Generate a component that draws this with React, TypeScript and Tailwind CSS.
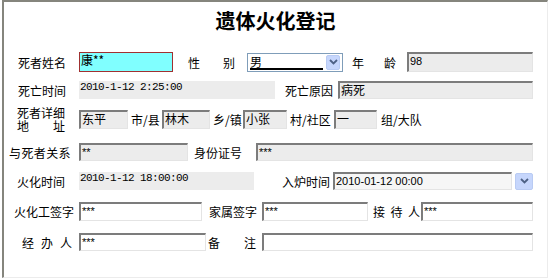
import React from "react";

const cjk = "font-['SimSun','Noto_Sans_CJK_SC',sans-serif]";
const inset =
  "h-full shrink-0 border-t-2 border-l-2 border-b border-r border-t-[#7c7c7c] border-l-[#7c7c7c] border-b-[#e4e4e4] border-r-[#e4e4e4] px-[1px] text-[11px] leading-[14px] font-['Liberation_Sans','Noto_Sans_CJK_SC',sans-serif] text-black overflow-hidden whitespace-nowrap";
const timeBox =
  "h-full shrink-0 bg-[#ececec] pl-[1px] font-['Liberation_Mono',monospace] text-[11px] tracking-[-0.6px] leading-[13px]";

function Chevron() {
  return (
    <svg width="9" height="6" viewBox="0 0 9 6">
      <polyline points="1,1 4.5,4.5 8,1" fill="none" stroke="#4d6185" strokeWidth="1.8" />
    </svg>
  );
}

function DropBtn({ className }: { className: string }) {
  return (
    <div className={`${className} flex items-center justify-center rounded-[2px] border border-[#b9cbf3] bg-[#c6d6fc]`}>
      <Chevron />
    </div>
  );
}

export default function App() {
  return (
    <div className={`w-[550px] h-[280px] bg-white overflow-hidden ${cjk} text-[12px] leading-[13px] text-black`}>
      <div className="ml-[2px] w-[546px] h-[278px] border-l-2 border-t-2 border-l-[#85857d] border-t-[#85857d] border-r border-b border-r-[#ececec] border-b-[#ececec] flex flex-col">
        <div className="mt-[7px] h-[24px] text-center text-[20px] leading-[24px] font-bold">遗体火化登记</div>

        {/* row 1 */}
        <div className="mt-[19px] h-[20px] flex items-center">
          <span className="ml-[14px] w-[48px] shrink-0">死者姓名</span>
          <div className="ml-[13px] w-[94px] h-full shrink-0 border border-[#a03030] bg-[#80ffff] px-[1px] text-[12px] leading-[13px]">康**</div>
          <span className="ml-[15px] w-[12px] shrink-0">性</span>
          <span className="ml-[23px] w-[12px] shrink-0">别</span>
          <div className="ml-[12px] w-[96px] h-[19px] shrink-0 border border-[#7f9db9] bg-white flex items-center pl-[2px] pr-[2px]">
            <span className="flex-1 h-[15px] border-b-2 border-black leading-[13px]">男</span>
            <DropBtn className="ml-[3px] w-[14px] h-[15px]" />
          </div>
          <span className="ml-[9px] w-[12px] shrink-0">年</span>
          <span className="ml-[20px] w-[12px] shrink-0">龄</span>
          <div className={`ml-[11px] w-[126px] bg-[#ececec] ${inset}`}>98</div>
        </div>

        {/* row 2 */}
        <div className="mt-[9px] h-[18px] flex items-center">
          <span className="ml-[14px] w-[48px] shrink-0">死亡时间</span>
          <div className={`ml-[13px] w-[196px] ${timeBox}`}>2010-1-12 2:25:00</div>
          <span className="ml-[10px] w-[48px] shrink-0">死亡原因</span>
          <div className={`ml-[5px] w-[195px] bg-[#ececec] ${inset} ${cjk} text-[12px]`}>病死</div>
        </div>

        {/* row 3 */}
        <div className="mt-[7px] h-[26px] flex items-center">
          <span className="ml-[13px] w-[52px] shrink-0 leading-[13px] whitespace-pre">
            死者详细
            <br />
            地　　址
          </span>
          <div className={`ml-[10px] w-[49px] !h-[19px] bg-[#ececec] ${inset} ${cjk} text-[12px]`}>东平</div>
          <span className="ml-[3px] w-[30px] shrink-0 whitespace-nowrap">市/县</span>
          <div className={`ml-[1px] w-[48px] !h-[19px] bg-[#ececec] ${inset} ${cjk} text-[12px]`}>林木</div>
          <span className="ml-[3px] w-[30px] shrink-0 whitespace-nowrap">乡/镇</span>
          <div className={`w-[44px] !h-[19px] bg-[#ececec] ${inset} ${cjk} text-[12px]`}>小张</div>
          <span className="ml-[3px] w-[42px] shrink-0 whitespace-nowrap">村/社区</span>
          <div className={`ml-[2px] w-[43px] !h-[19px] bg-[#ececec] ${inset} ${cjk} text-[12px]`}>一</div>
          <span className="ml-[4px] shrink-0 whitespace-nowrap">组/大队</span>
        </div>

        {/* row 4 */}
        <div className="mt-[11px] h-[18px] flex items-center">
          <span className="ml-[5px] w-[62px] shrink-0 tracking-[0.4px] whitespace-nowrap">与死者关系</span>
          <div className={`ml-[8px] w-[109px] bg-[#ececec] ${inset}`}>**</div>
          <span className="ml-[6px] w-[48px] shrink-0">身份证号</span>
          <div className={`ml-[14px] w-[277px] bg-[#ececec] ${inset}`}>***</div>
        </div>

        {/* row 5 */}
        <div className="mt-[11px] h-[18px] flex items-center">
          <span className="ml-[13px] w-[48px] shrink-0">火化时间</span>
          <div className={`ml-[14px] w-[175px] ${timeBox}`}>2010-1-12 18:00:00</div>
          <span className="ml-[28px] w-[48px] shrink-0">入炉时间</span>
          <div className={`ml-[3px] w-[179px] bg-[#f6f6f6] ${inset}`}>2010-01-12 00:00</div>
          <DropBtn className="ml-[3px] w-[18px] h-[17px] shrink-0" />
        </div>

        {/* row 6 */}
        <div className="mt-[12px] h-[19px] flex items-center">
          <span className="ml-[10px] w-[60px] shrink-0 whitespace-nowrap">火化工签字</span>
          <div className={`ml-[5px] w-[123px] bg-white ${inset}`}>***</div>
          <span className="ml-[7px] w-[48px] shrink-0">家属签字</span>
          <div className={`ml-[5px] w-[106px] bg-white ${inset}`}>***</div>
          <span className="ml-[5px] w-[47px] shrink-0 flex justify-between">
            <span>接</span>
            <span>待</span>
            <span>人</span>
          </span>
          <div className={`ml-[1px] w-[112px] bg-white ${inset}`}>***</div>
        </div>

        {/* row 7 */}
        <div className="mt-[12px] h-[18px] flex items-center">
          <span className="ml-[18px] w-[50px] shrink-0 flex justify-between">
            <span>经</span>
            <span>办</span>
            <span>人</span>
          </span>
          <div className={`ml-[7px] w-[127px] bg-white ${inset}`}>***</div>
          <span className="ml-[2px] w-[48px] shrink-0 flex justify-between">
            <span>备</span>
            <span>注</span>
          </span>
          <div className={`ml-[6px] w-[271px] bg-white ${inset}`}></div>
        </div>
      </div>
    </div>
  );
}
